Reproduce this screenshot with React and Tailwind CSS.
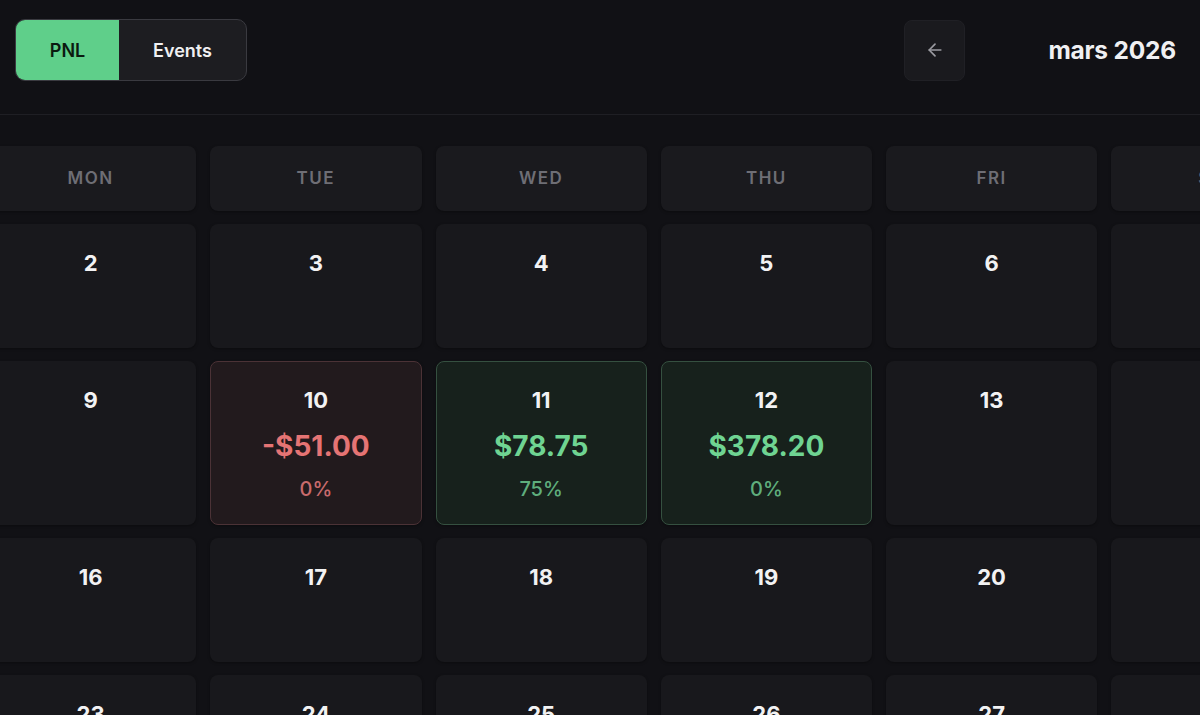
import React from "react";

const days = ["MON", "TUE", "WED", "THU", "FRI", "SAT", "SUN"];

const rows = [
  { h: "h-[124px]", cells: [2, 3, 4, 5, 6, 7, 8] },
  { h: "h-[164px]", cells: [9, 10, 11, 12, 13, 14, 15] },
  { h: "h-[124px]", cells: [16, 17, 18, 19, 20, 21, 22] },
  { h: "h-[124px]", cells: [23, 24, 25, 26, 27, 28, 29] },
];

const pnl = {
  10: { amount: "-$51.00", pct: "0%", type: "loss" },
  11: { amount: "$78.75", pct: "75%", type: "win" },
  12: { amount: "$378.20", pct: "0%", type: "win" },
};

function DayCell({ day, h }) {
  const d = pnl[day];
  let cls = "bg-[#18181c] border border-transparent";
  if (d && d.type === "loss") cls = "bg-[#221a1d] border border-[#4b3236]";
  if (d && d.type === "win") cls = "bg-[#17211c] border border-[#355040]";
  return (
    <div className={`${h} rounded-[8px] ${cls} flex flex-col items-center pt-[24px] shadow-[0_1px_3px_rgba(0,0,0,0.35)]`}>
      <div className="text-[22px] leading-[28px] font-bold text-[#f2f2f3]">{day}</div>
      {d && (
        <>
          <div className={`mt-[15px] text-[28px] leading-[34px] font-bold ${d.type === "loss" ? "text-[#e57474]" : "text-[#6fd492]"}`}>
            {d.amount}
          </div>
          <div className={`mt-[14px] text-[20px] leading-[24px] font-medium ${d.type === "loss" ? "text-[#c96a6c]" : "text-[#5fae7d]"}`}>
            {d.pct}
          </div>
        </>
      )}
    </div>
  );
}

export default function App() {
  return (
    <div className="w-[1200px] h-[715px] overflow-hidden bg-[#111115]" style={{ fontFamily: "Inter, 'Noto Sans', sans-serif" }}>
      <div className="h-[115px] border-b border-[#1f1f24] flex items-center justify-between pl-[15px] pr-[24px] pb-[14px]">
        <div className="flex h-[62px] rounded-[10px] border border-[#3a3a40] overflow-hidden bg-[#1d1d21]">
          <div className="w-[103px] bg-[#5fcf8a] flex items-center justify-center text-[18px] font-semibold text-[#0b1a10]">PNL</div>
          <div className="w-[127px] flex items-center justify-center text-[18px] font-semibold text-[#f0f0f2]">Events</div>
        </div>
        <div className="flex items-center">
          <button className="w-[61px] h-[61px] rounded-[8px] bg-[#1a1a1e] border border-[#202025] flex items-center justify-center text-[#9b9ba1]">
            <svg width="20" height="20" viewBox="0 0 24 24" fill="none" stroke="currentColor" strokeWidth="2" strokeLinecap="round" strokeLinejoin="round">
              <path d="M19 12H5" />
              <path d="M12 19l-7-7 7-7" />
            </svg>
          </button>
          <div className="ml-[83px] text-[24.5px] font-bold text-[#f0f0f2] tracking-[-0.2px]">mars 2026</div>
        </div>
      </div>
      <div className="pt-[31px] ml-[-15px]">
        <div className="grid grid-cols-[repeat(7,211.25px)] gap-x-[14px] gap-y-[13px]">
          {days.map((d) => (
            <div key={d} className="h-[65px] rounded-[8px] bg-[#1a1a1e] flex items-center justify-center text-[17px] font-semibold tracking-[1.5px] text-[#6e6e75] shadow-[0_1px_3px_rgba(0,0,0,0.35)]">
              {d}
            </div>
          ))}
          {rows.map((r) =>
            r.cells.map((c) => <DayCell key={c} day={c} h={r.h} />)
          )}
        </div>
      </div>
    </div>
  );
}
